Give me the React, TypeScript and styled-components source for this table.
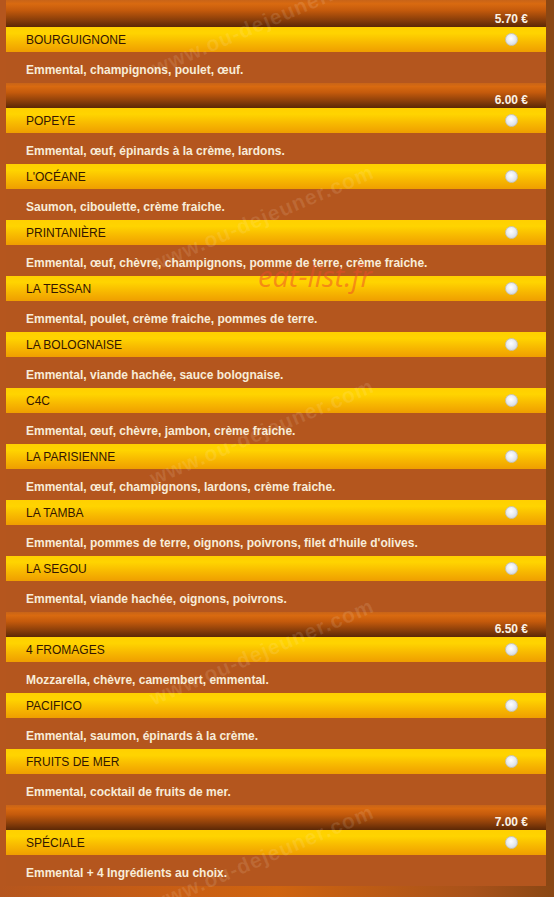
import styled, { createGlobalStyle } from "styled-components";

const GlobalStyle = createGlobalStyle`
  html, body {
    margin: 0;
    padding: 0;
  }
  body {
    width: 554px;
    height: 897px;
    overflow: hidden;
    font-family: "Liberation Sans", Arial, sans-serif;
    background: linear-gradient(to right, #b5561e 0px, #c85e14 30%, #cf6410 50%, #a9521a 85%, #8a4714 100%);
  }
`;

const Page = styled.div`
  display: flex;
  width: 554px;
  min-height: 897px;
  padding-left: 6px;
  box-sizing: border-box;
  background: linear-gradient(to right, #b5561e 0 6px, transparent 6px 546px, #8a4714 546px);
  background-size: 100% 886px;
  background-repeat: no-repeat;
`;

const Menu = styled.div`
  position: relative;
  width: 540px;
  display: flex;
  flex-direction: column;
  overflow: hidden;
`;

const PriceBar = styled.div<{ $first?: boolean }>`
  height: ${(p) => (p.$first ? 27 : 25)}px;
  display: flex;
  align-items: flex-end;
  justify-content: flex-end;
  padding: 0 18px 1px 0;
  box-sizing: border-box;
  background: linear-gradient(
    to bottom,
    #c86418 0%,
    #d96a10 14%,
    #c45a0c 38%,
    #8c3f0a 72%,
    #5c2806 100%
  );
`;

const Price = styled.span`
  color: #fbf3e6;
  font-weight: bold;
  font-size: 12px;
  line-height: 14px;
`;

const Header = styled.div`
  height: 25px;
  display: flex;
  align-items: center;
  justify-content: space-between;
  padding: 0 28px 0 20px;
  box-sizing: border-box;
  background: linear-gradient(to bottom, #ffd000 0%, #ffd400 25%, #f8ba00 60%, #ef9e00 100%);
`;

const Name = styled.span`
  color: #331600;
  font-size: 12px;
`;

const Radio = styled.span`
  width: 11px;
  height: 11px;
  border-radius: 50%;
  border: 1px solid #c8c4bc;
  background: radial-gradient(circle at 45% 40%, #ffffff 0%, #e8ecf2 45%, #c9ced6 100%);
`;

const Desc = styled.div`
  height: 31px;
  display: flex;
  align-items: center;
  padding: 4px 0 0 20px;
  box-sizing: border-box;
  background: #b4561e;
  color: #f8ecd8;
  font-size: 12px;
  font-weight: bold;
`;

const Watermark = styled.span`
  position: absolute;
  white-space: nowrap;
  font-family: "Liberation Sans", Arial, sans-serif;
  font-weight: bold;
  font-size: 21px;
  letter-spacing: 1px;
  color: rgba(255, 240, 220, 0.12);
  transform: translate(-50%, -50%) rotate(-23deg);
  pointer-events: none;
`;

const Stamp = styled.span`
  position: absolute;
  left: 252px;
  top: 256px;
  font-family: "Open Sans", "DejaVu Sans", sans-serif;
  font-style: italic;
  font-size: 29px;
  color: rgba(238, 74, 40, 0.5);
  pointer-events: none;
`;

type Item = { name: string; desc: string };
type Group = { price: string; items: Item[] };

const groups: Group[] = [
  {
    price: "5.70 €",
    items: [{ name: "BOURGUIGNONE", desc: "Emmental, champignons, poulet, œuf." }],
  },
  {
    price: "6.00 €",
    items: [
      { name: "POPEYE", desc: "Emmental, œuf, épinards à la crème, lardons." },
      { name: "L'OCÉANE", desc: "Saumon, ciboulette, crème fraiche." },
      {
        name: "PRINTANIÈRE",
        desc: "Emmental, œuf, chèvre, champignons, pomme de terre, crème fraiche.",
      },
      { name: "LA TESSAN", desc: "Emmental, poulet, crème fraiche, pommes de terre." },
      { name: "LA BOLOGNAISE", desc: "Emmental, viande hachée, sauce bolognaise." },
      { name: "C4C", desc: "Emmental, œuf, chèvre, jambon, crème fraiche." },
      { name: "LA PARISIENNE", desc: "Emmental, œuf, champignons, lardons, crème fraiche." },
      {
        name: "LA TAMBA",
        desc: "Emmental, pommes de terre, oignons, poivrons, filet d'huile d'olives.",
      },
      { name: "LA SEGOU", desc: "Emmental, viande hachée, oignons, poivrons." },
    ],
  },
  {
    price: "6.50 €",
    items: [
      { name: "4 FROMAGES", desc: "Mozzarella, chèvre, camembert, emmental." },
      { name: "PACIFICO", desc: "Emmental, saumon, épinards à la crème." },
      { name: "FRUITS DE MER", desc: "Emmental, cocktail de fruits de mer." },
    ],
  },
  {
    price: "7.00 €",
    items: [{ name: "SPÉCIALE", desc: "Emmental + 4 Ingrédients au choix." }],
  },
];

const marks = [
  { x: 258, y: 22 },
  { x: 256, y: 218 },
  { x: 256, y: 432 },
  { x: 256, y: 652 },
  { x: 256, y: 858 },
];

export default function App() {
  return (
    <>
      <GlobalStyle />
      <Page>
        <Menu>
          {groups.map((g, gi) => (
            <div key={g.price}>
              <PriceBar $first={gi === 0}>
                <Price>{g.price}</Price>
              </PriceBar>
              {g.items.map((it) => (
                <div key={it.name}>
                  <Header>
                    <Name>{it.name}</Name>
                    <Radio />
                  </Header>
                  <Desc>{it.desc}</Desc>
                </div>
              ))}
            </div>
          ))}
          {marks.map((m, i) => (
            <Watermark key={i} style={{ left: m.x, top: m.y }}>
              www.ou-dejeuner.com
            </Watermark>
          ))}
          <Stamp>eat-list.fr</Stamp>
        </Menu>
      </Page>
    </>
  );
}
